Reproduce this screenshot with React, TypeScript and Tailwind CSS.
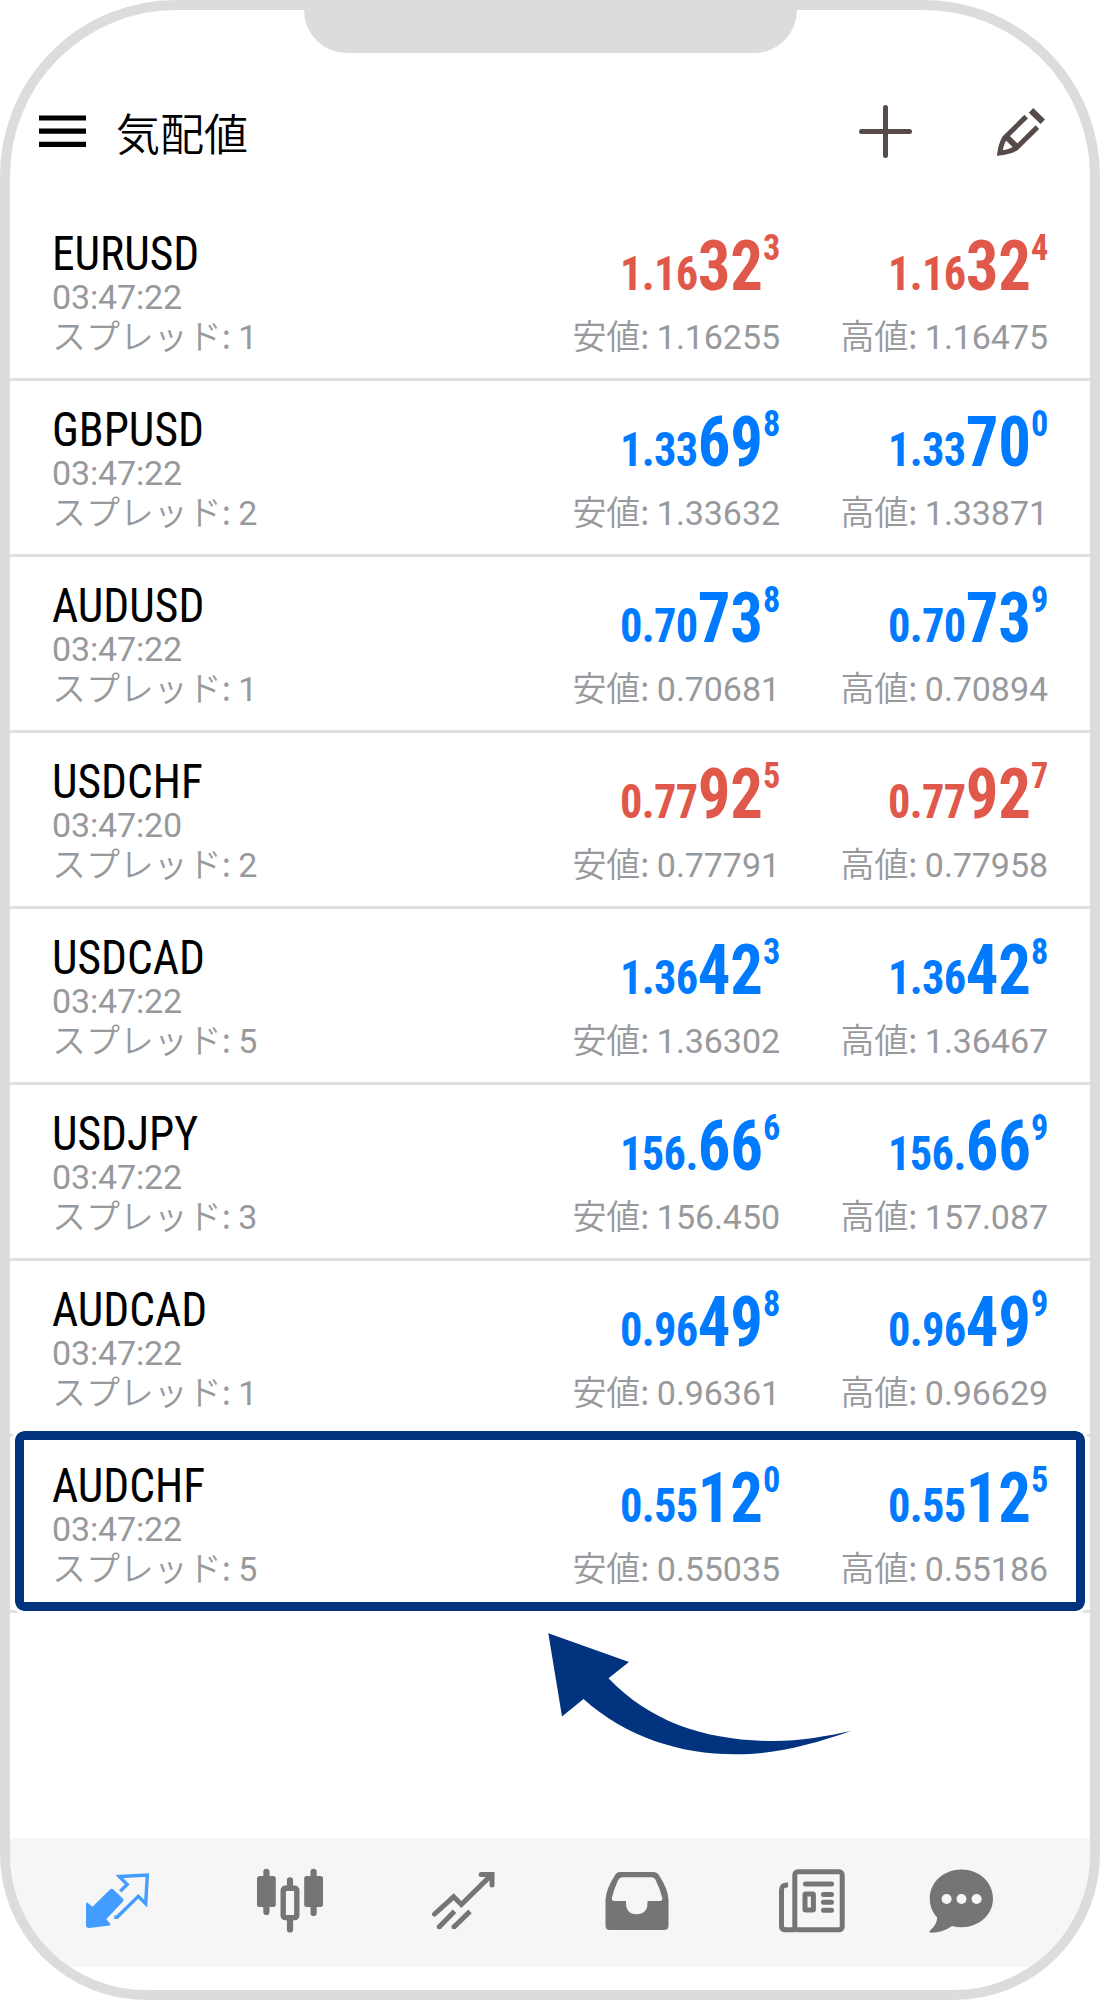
type Direction = "up" | "down";

type Quote = {
  symbol: string;
  time: string;
  spread: number;
  direction: Direction;
  bid: [string, string, string];
  ask: [string, string, string];
  low: string;
  high: string;
};

const quotes: Quote[] = [
  { symbol: "EURUSD", time: "03:47:22", spread: 1, direction: "down", bid: ["1.16", "32", "3"], ask: ["1.16", "32", "4"], low: "1.16255", high: "1.16475" },
  { symbol: "GBPUSD", time: "03:47:22", spread: 2, direction: "up", bid: ["1.33", "69", "8"], ask: ["1.33", "70", "0"], low: "1.33632", high: "1.33871" },
  { symbol: "AUDUSD", time: "03:47:22", spread: 1, direction: "up", bid: ["0.70", "73", "8"], ask: ["0.70", "73", "9"], low: "0.70681", high: "0.70894" },
  { symbol: "USDCHF", time: "03:47:20", spread: 2, direction: "down", bid: ["0.77", "92", "5"], ask: ["0.77", "92", "7"], low: "0.77791", high: "0.77958" },
  { symbol: "USDCAD", time: "03:47:22", spread: 5, direction: "up", bid: ["1.36", "42", "3"], ask: ["1.36", "42", "8"], low: "1.36302", high: "1.36467" },
  { symbol: "USDJPY", time: "03:47:22", spread: 3, direction: "up", bid: ["156.", "66", "6"], ask: ["156.", "66", "9"], low: "156.450", high: "157.087" },
  { symbol: "AUDCAD", time: "03:47:22", spread: 1, direction: "up", bid: ["0.96", "49", "8"], ask: ["0.96", "49", "9"], low: "0.96361", high: "0.96629" },
  { symbol: "AUDCHF", time: "03:47:22", spread: 5, direction: "up", bid: ["0.55", "12", "0"], ask: ["0.55", "12", "5"], low: "0.55035", high: "0.55186" },
];

const priceColor: Record<Direction, string> = {
  up: "text-[#007aff]",
  down: "text-[#df584a]",
};

const Label = ({ text, value }: { text: string; value: string | number }) => (
  <p className="text-[34px] leading-[42px] tracking-[-0.07px] whitespace-pre text-[#97999d]">
    <span className="font-['Noto_Sans_CJK_JP',sans-serif] leading-none font-[350]">{text}: </span>
    {value}
  </p>
);

type PriceProps = {
  parts: [string, string, string];
  direction: Direction;
  label: string;
  limit: string;
};

const Price = ({ parts, direction, label, limit }: PriceProps) => {
  const [base, pips, point] = parts;

  return (
    <div className="flex w-[268px] flex-col items-end">
      <div
        className={`flex h-[111px] origin-right scale-x-[.925] items-baseline pt-[26px] font-['Roboto_Condensed',Roboto,sans-serif] font-bold font-stretch-condensed ${priceColor[direction]}`}
      >
        <span className="text-[48px] leading-[70px] tracking-[-0.7px]">{base}</span>
        <span className="text-[70px] leading-[70px]">{pips}</span>
        <span className="relative -top-[30px] text-[37px] leading-none">{point}</span>
      </div>
      <Label text={label} value={limit} />
    </div>
  );
};

const QuoteRow = ({ quote }: { quote: Quote }) => (
  <li className="flex h-[176px] border-b-[3px] border-[#e0e0e0] px-[42px]">
    <div className="flex-1 pt-[25px]">
      <h2 className="origin-left scale-x-[.947] font-['Roboto_Condensed',Roboto,sans-serif] text-[48px] leading-[48px] text-black font-stretch-condensed">
        {quote.symbol}
      </h2>
      <p className="text-[34px] leading-[38px] tracking-[-0.15px] text-[#97999d]">{quote.time}</p>
      <Label text="スプレッド" value={quote.spread} />
    </div>
    <Price parts={quote.bid} direction={quote.direction} label="安値" limit={quote.low} />
    <Price parts={quote.ask} direction={quote.direction} label="高値" limit={quote.high} />
  </li>
);

const MenuIcon = () => (
  <svg width="47" height="32" viewBox="0 0 47 32" aria-hidden="true">
    <path d="M0 3h47M0 16.200h47M0 29.300h47" stroke="#000" strokeWidth="5.200" />
  </svg>
);

const PlusIcon = () => (
  <svg width="53" height="53" viewBox="0 0 53 53" aria-hidden="true">
    <path d="M26.500 2.500v48M2.500 26.500h48" stroke="#574b49" strokeWidth="5" strokeLinecap="round" />
  </svg>
);

const PencilIcon = () => (
  <svg width="50" height="50" viewBox="0 0 50 50" aria-hidden="true">
    <g fill="none" stroke="#574b49" strokeWidth="5">
      <path d="M29.2 9.6 7.7 30.7Q4 37 2.8 46Q12 45.3 18.8 41.4L40.4 20.1" />
      <path d="M9.5 29.800 21 41.200" strokeWidth="6" />
      <path d="M34 3.400 45.800 14.800" strokeWidth="6.400" />
    </g>
  </svg>
);

const QuotesIcon = () => (
  <svg width="66" height="66" viewBox="0 0 66 66" aria-hidden="true">
    <path
      d="M1.600 34.800 6.500 38.800 24 21.500Q25.700 20 27.400 21.500L37.200 31.100Q38 32.300 37 33.500L20.200 51.200 24.500 55.800 23.800 57.400 3 60Q0 60 0 57V35.500Q.5 34 1.600 34.800Z"
      fill="#439cff"
    />
    <path
      d="M34.200 23.300 41.200 16.500 33.400 8.600 61.300 7 59.700 35.600 52.300 28.300 31 49.200H28.300"
      fill="none"
      stroke="#439cff"
      strokeWidth="3.400"
    />
  </svg>
);

const CandlesIcon = () => (
  <svg width="66" height="66" viewBox="0 0 66 66" aria-hidden="true">
    <g fill="none" stroke="#757575" strokeWidth="6.200" strokeLinecap="round">
      <path d="M9.400 3.800V44M56.600 3.800V45M33 12.300V20M33 52V61.400" />
    </g>
    <rect x="0" y="8" width="18.800" height="31" rx="2.500" fill="#757575" />
    <rect x="47.200" y="8" width="18.800" height="31" rx="2.500" fill="#757575" />
    <rect x="26.200" y="20.200" width="13.600" height="29.400" rx="2" fill="#f6f6f6" stroke="#757575" strokeWidth="5.400" />
  </svg>
);

const TrendIcon = () => (
  <svg width="64" height="66" viewBox="0 0 64 66" aria-hidden="true">
    <g fill="none" stroke="#757575" strokeWidth="5">
      <path d="M2.600 46 21.600 28.800 29.400 36.600 59 7.400" strokeLinecap="round" />
      <path d="M49.200 6.400H60V17" strokeLinecap="round" />
      <path d="M7.200 59 22.500 43.200M22 59 38 43.400" />
    </g>
    <circle cx="7.200" cy="58.800" r="2.500" fill="#757575" />
    <circle cx="22" cy="58.800" r="2.500" fill="#757575" />
  </svg>
);

const InboxIcon = () => (
  <svg width="64" height="66" viewBox="0 0 64 66" aria-hidden="true">
    <path
      fillRule="evenodd"
      d="M15 4H48Q52.500 4 54.500 8Q63 21 63.500 32V57.500Q63.500 62 59 62H5Q.5 62 .5 57.500V32Q1 21 9.500 8Q11.500 4 15 4ZM18 9.200Q14.500 9.200 13 12.500Q9 21 7 29.500Q6.200 33 9.500 33H21V35Q21 46 31.500 46.200Q42.500 46 42.500 35V33H54.500Q58 33 57.200 29.500Q55 21 50.800 12.500Q49.500 9.200 46 9.200Z"
      fill="#757575"
    />
  </svg>
);

const NewsIcon = () => (
  <svg width="66" height="66" viewBox="0 0 66 66" aria-hidden="true">
    <g fill="none" stroke="#757575" strokeWidth="5">
      <rect x="15.800" y="3.800" width="47.400" height="58" rx="3" />
      <path d="M9 17Q2.500 16.600 2.500 22V58Q2.500 61.800 6.500 61.800H16" />
      <path d="M26.500 16H52.500M44.500 26.500H52.500M44.500 34.300H52.500M44.500 42.200H52.500" strokeLinecap="round" />
      <rect x="26" y="26" width="8.400" height="16" rx=".8" />
    </g>
  </svg>
);

const ChatIcon = () => (
  <svg width="66" height="66" viewBox="0 0 66 66" aria-hidden="true">
    <path
      d="M32.500 1.500C50 1.500 64 14 64 30.500S50 59.200 32.500 59.200Q27.500 59.200 23.200 58Q14 64.500 2 64.800C.5 64.800 0 63.500 1.200 62.500Q8 56.500 8.200 49.500C3.500 44.500.8 38 .8 30.500.8 14 15 1.500 32.500 1.500Z"
      fill="#757575"
    />
    <g fill="#f6f6f6">
      <circle cx="17.600" cy="31" r="5" />
      <circle cx="32.500" cy="31" r="5" />
      <circle cx="47.600" cy="31" r="5" />
    </g>
  </svg>
);

const PointerArrow = () => (
  <svg width="304" height="124" viewBox="0 0 304 124" aria-hidden="true">
    <path
      d="M.3 .3 81 29 60.500 45.300C103 90 160 108 225 108C252 108 280 103 303 98C262 112 228 121.300 187 121.300C132 121.300 78 104 35.500 66L14 83.500Z"
      fill="#02337f"
    />
  </svg>
);

export default function App() {
  return (
    <div className="relative flex h-[2000px] w-[1100px] flex-col overflow-hidden rounded-t-[176px] rounded-b-[146px] border-[10px] border-[#dcdcdc] bg-white font-[Roboto,'Noto_Sans_CJK_JP',sans-serif]">
      <div className="h-[43px] w-[493px] shrink-0 self-center rounded-b-[43px] bg-[#dcdcdc]" />

      <header className="flex h-[152px] shrink-0 items-start pt-[51px] pr-[43px] pl-[29px]">
        <div className="pt-[11px]">
          <MenuIcon />
        </div>
        <h1 className="-mt-[2px] ml-[30px] flex-1 font-['Noto_Sans_CJK_JP',sans-serif] text-[44px] leading-[60px] font-[350] text-black">
          気配値
        </h1>
        <div className="mr-[85px] pt-px">
          <PlusIcon />
        </div>
        <div className="pt-[3px]">
          <PencilIcon />
        </div>
      </header>

      <main className="flex-1">
        <ul>
          {quotes.map((quote) => (
            <QuoteRow key={quote.symbol} quote={quote} />
          ))}
        </ul>
      </main>

      <nav className="mb-[23px] flex h-[129px] shrink-0 items-start bg-[#f6f6f6] pt-[30px] pl-[76px]">
        <div className="w-[171px]"><QuotesIcon /></div>
        <div className="w-[175px]"><CandlesIcon /></div>
        <div className="w-[173px]"><TrendIcon /></div>
        <div className="w-[174px]"><InboxIcon /></div>
        <div className="w-[150px]"><NewsIcon /></div>
        <ChatIcon />
      </nav>

      {/* callout around the last pair */}
      <div className="absolute top-[1421px] left-[5px] h-[180px] w-[1070px] rounded-[9px] border-[9px] border-[#02337f] outline-3 outline-white" />
      <div className="absolute top-[1623px] left-[538px]">
        <PointerArrow />
      </div>
    </div>
  );
}
